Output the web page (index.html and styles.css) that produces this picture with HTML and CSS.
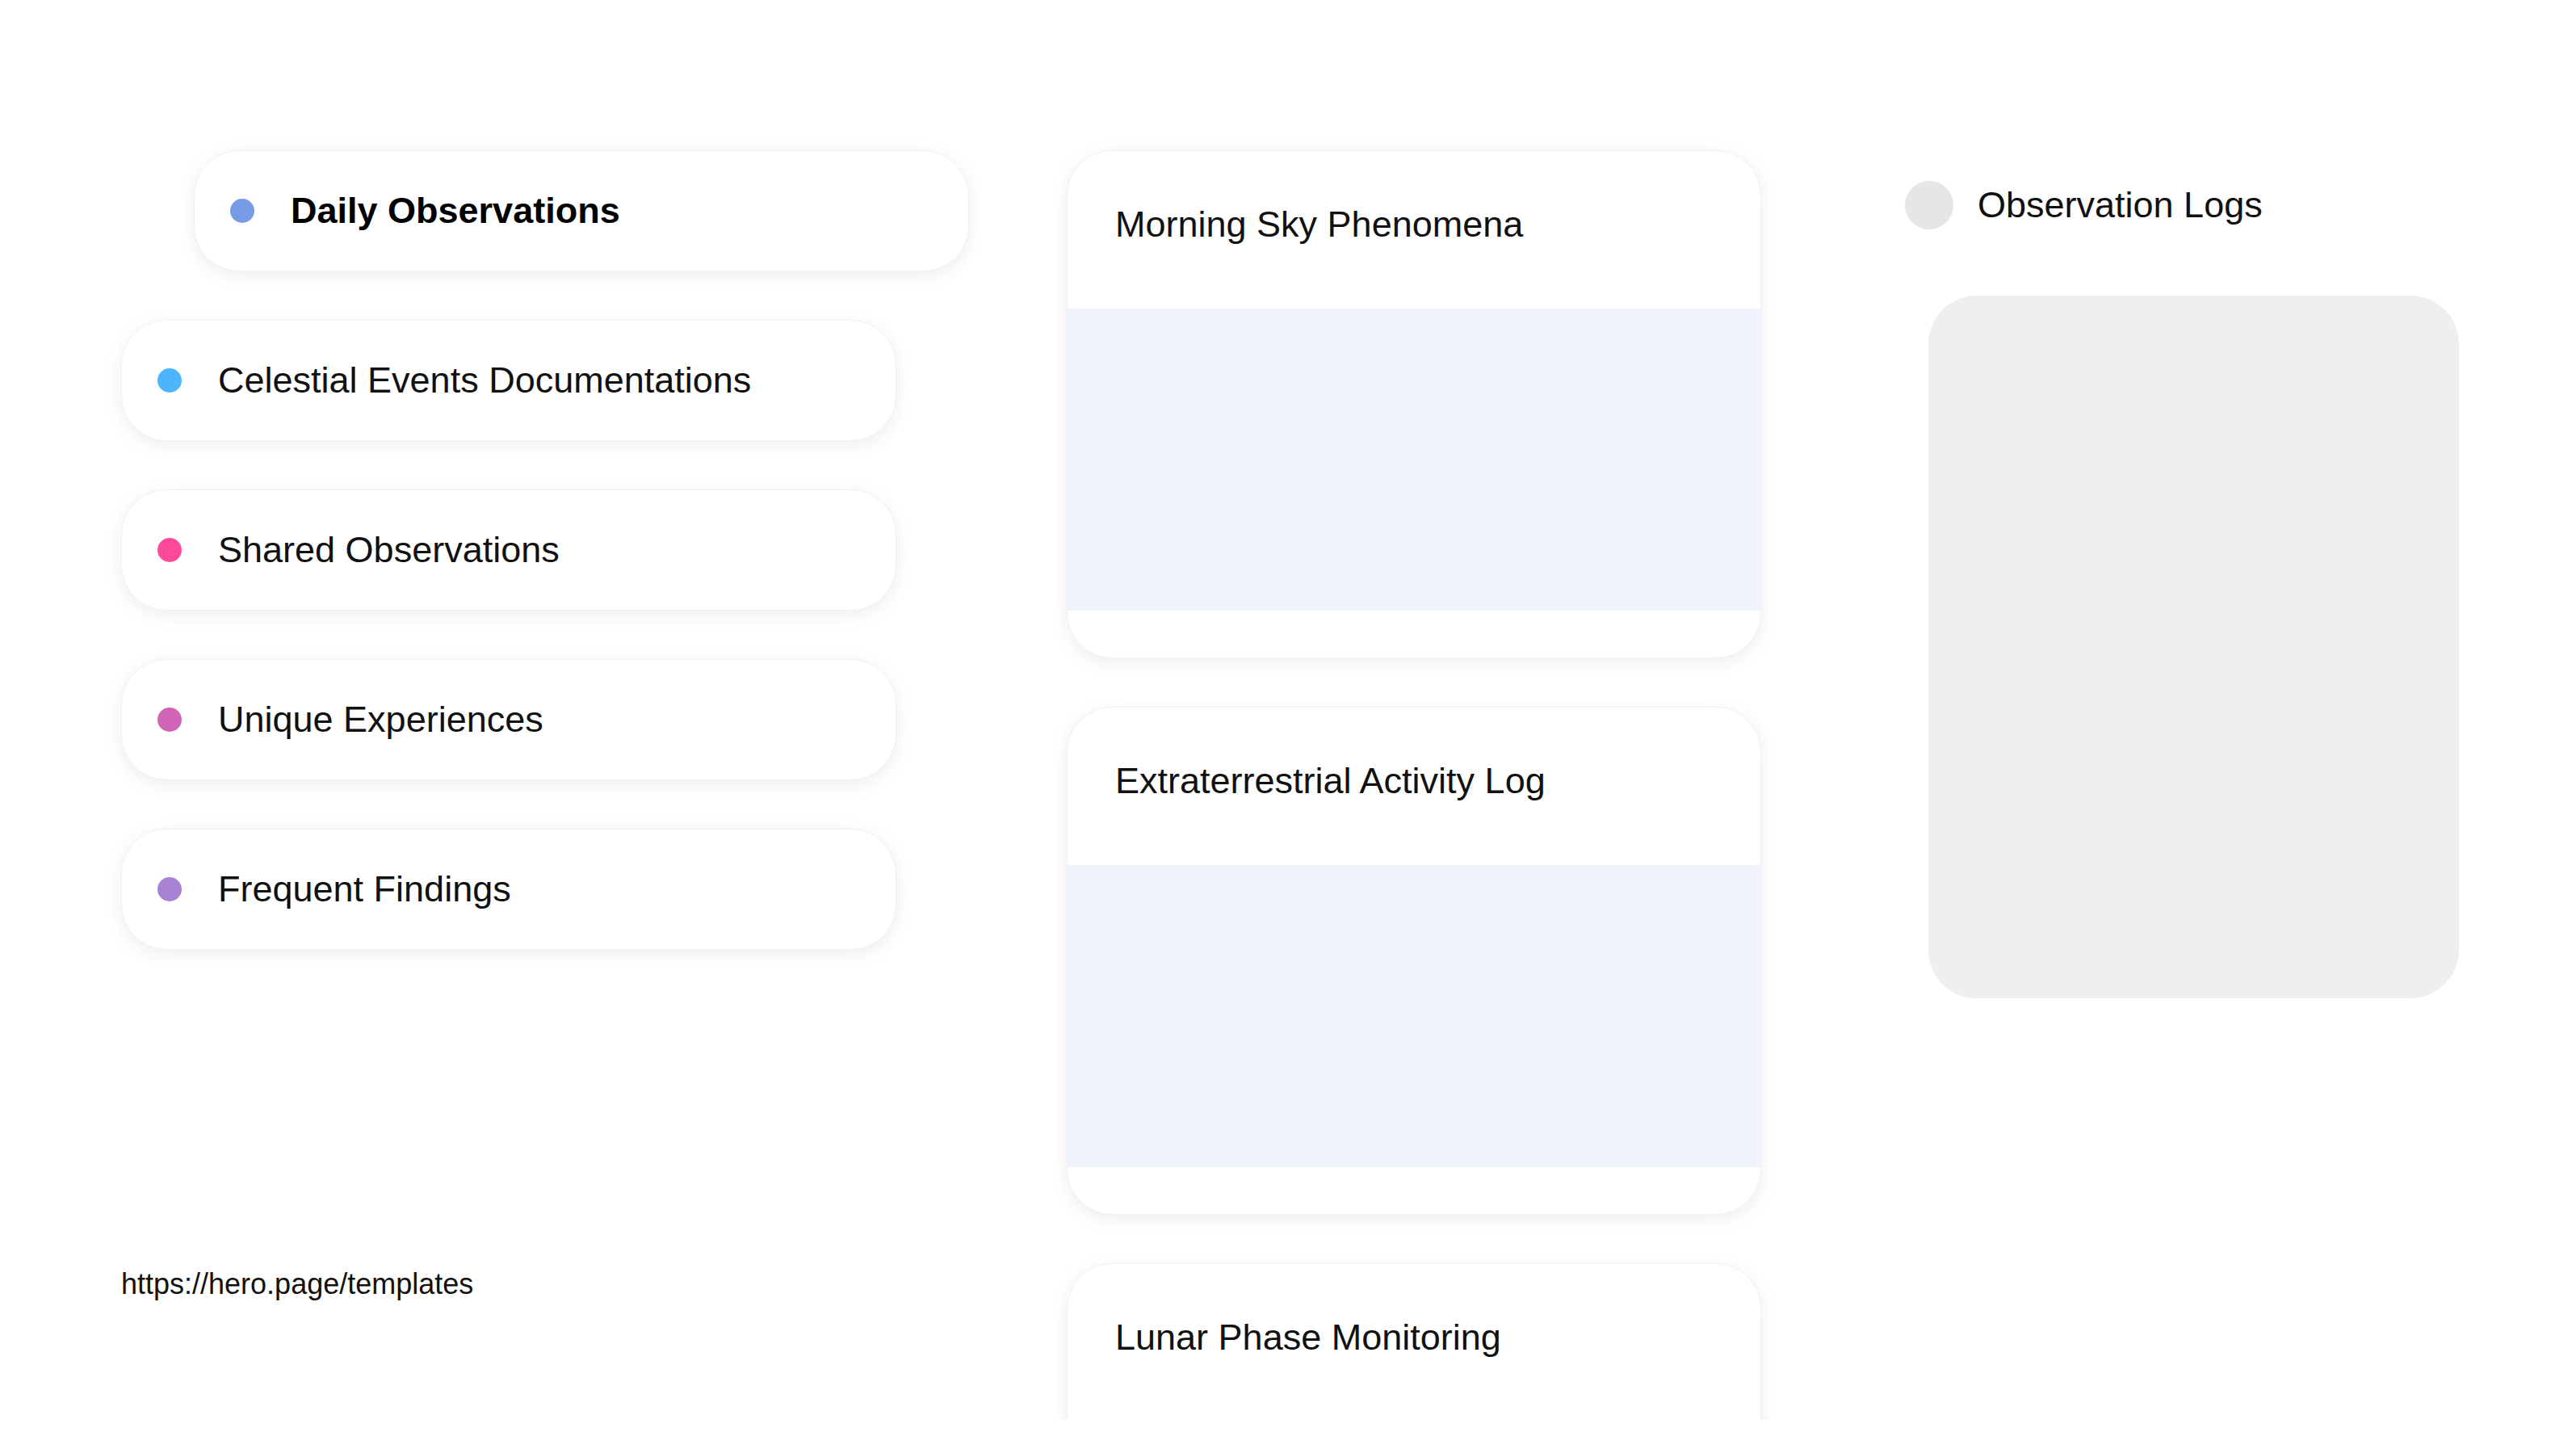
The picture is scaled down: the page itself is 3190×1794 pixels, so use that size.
FILE: index.html
```html
<!DOCTYPE html>
<html lang="en">
<head>
<meta charset="utf-8">
<title>Observations</title>
<link rel="stylesheet" href="styles.css">
</head>
<body>
<div class="page">
  <div class="col-left">
    <ul class="nav">
      <li class="nav-item active"><span class="dot dot-daily"></span><span class="nav-label">Daily Observations</span></li>
      <li class="nav-item"><span class="dot dot-celestial"></span><span class="nav-label">Celestial Events Documentations</span></li>
      <li class="nav-item"><span class="dot dot-shared"></span><span class="nav-label">Shared Observations</span></li>
      <li class="nav-item"><span class="dot dot-unique"></span><span class="nav-label">Unique Experiences</span></li>
      <li class="nav-item"><span class="dot dot-frequent"></span><span class="nav-label">Frequent Findings</span></li>
    </ul>
    <div class="url">https://hero.page/templates</div>
  </div>

  <div class="col-mid">
    <div class="card">
      <div class="card-head">Morning Sky Phenomena</div>
      <div class="card-media"></div>
      <div class="card-foot"></div>
    </div>
    <div class="card">
      <div class="card-head">Extraterrestrial Activity Log</div>
      <div class="card-media"></div>
      <div class="card-foot"></div>
    </div>
    <div class="card">
      <div class="card-head">Lunar Phase Monitoring</div>
      <div class="card-media"></div>
      <div class="card-foot"></div>
    </div>
  </div>

  <div class="col-right">
    <div class="logs-head">
      <span class="logs-avatar"></span>
      <span class="logs-title">Observation Logs</span>
    </div>
    <div class="logs-box"></div>
  </div>
</div>
</body>
</html>
```

FILE: styles.css
```css
* { box-sizing: border-box; }

html, body {
  margin: 0;
  padding: 0;
  background: #ffffff;
}

body {
  font-family: "Liberation Sans", Arial, Helvetica, sans-serif;
  color: #111111;
}

.page {
  height: 1758px;
  overflow: hidden;
  padding: 186px 0 0 150px;
  display: grid;
  grid-template-columns: 1050px 860px 744px;
  column-gap: 121px;
  align-items: start;
}

/* Left column */
.col-left {
  display: flex;
  flex-direction: column;
}

.nav {
  list-style: none;
  margin: 0;
  padding: 0;
  display: flex;
  flex-direction: column;
  gap: 60px;
}

.nav-item {
  width: 960px;
  height: 150px;
  border-radius: 56px;
  background: #ffffff;
  border: 1px solid #f1f1f1;
  box-shadow: 0 5px 22px rgba(0, 0, 0, 0.07);
  display: flex;
  align-items: center;
  gap: 45px;
  padding-left: 44px;
}

.nav-item.active {
  margin-left: 90px;
}

.dot {
  width: 30px;
  height: 30px;
  border-radius: 50%;
  flex: none;
}

.dot-daily { background: #789be6; }
.dot-celestial { background: #4cb5fd; }
.dot-shared { background: #ff4a9b; }
.dot-unique { background: #d064b6; }
.dot-frequent { background: #a883d3; }

.nav-label {
  font-size: 45px;
  line-height: 52px;
  color: #111111;
}

.active .nav-label {
  font-weight: 700;
  color: #000000;
}

.url {
  margin-top: 393px;
  font-size: 36px;
  line-height: 41px;
  color: #111111;
}

/* Middle column */
.col-mid {
  display: flex;
  flex-direction: column;
  gap: 60px;
}

.card {
  width: 860px;
  height: 629px;
  flex: none;
  border-radius: 56px;
  background: #ffffff;
  border: 1px solid #f1f1f1;
  box-shadow: 0 5px 22px rgba(0, 0, 0, 0.07);
  overflow: hidden;
  display: flex;
  flex-direction: column;
}

.card-head {
  height: 195px;
  flex: none;
  padding: 65px 60px 0 59px;
  font-size: 45px;
  line-height: 52px;
  color: #111111;
}

.card-media {
  height: 374px;
  flex: none;
  background: #eff4fc;
}

.card-foot {
  flex: 1;
}

/* Right column */
.col-right {
  padding-left: 57px;
  padding-top: 38px;
}

.logs-head {
  display: flex;
  align-items: center;
  gap: 30px;
  height: 60px;
}

.logs-avatar {
  width: 60px;
  height: 60px;
  border-radius: 50%;
  background: #e6e6e6;
  flex: none;
}

.logs-title {
  font-size: 45px;
  line-height: 52px;
  color: #111111;
}

.logs-box {
  margin: 82px 0 0 29px;
  width: 657px;
  height: 870px;
  border-radius: 60px;
  background: #efefef;
}
```
